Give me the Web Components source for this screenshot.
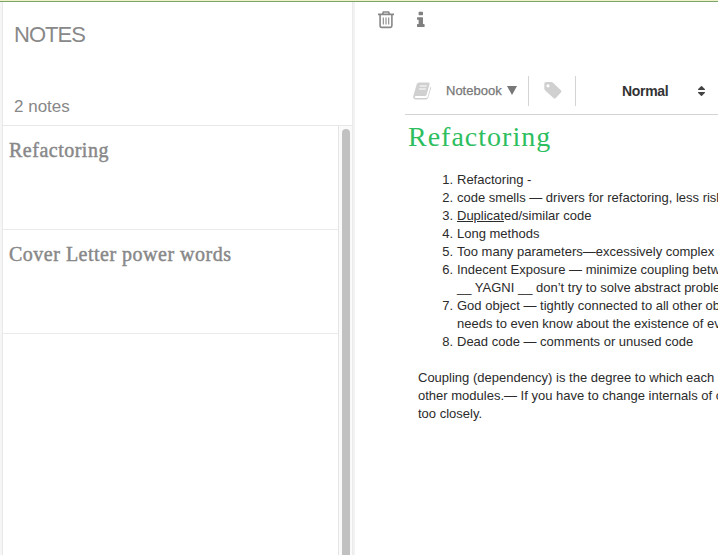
<!DOCTYPE html>
<html lang="en">
<head>
<meta charset="utf-8">
<title>Notes</title>
<style>
html,body{margin:0;height:100%;overflow:hidden;background:#fff}
body{font-family:"Liberation Sans",Arial,sans-serif}
</style>
</head>
<body>
<notes-app>
  <note-sidebar slot="side" heading="NOTES" count="2 notes">
    <note-card>Refactoring</note-card>
    <note-card style="--track:.5px">Cover Letter power words</note-card>
  </note-sidebar>
  <note-editor>
    <editor-toolbar slot="tools"></editor-toolbar>
    <span slot="title">Refactoring</span>
    <note-body></note-body>
  </note-editor>
</notes-app>
<script>
function define(name, markup, setup) {
  const t = document.createElement('template');
  t.innerHTML = markup;
  customElements.define(name, class extends HTMLElement {
    constructor() {
      super();
      this.attachShadow({mode: 'open'}).append(t.content.cloneNode(true));
    }
    connectedCallback() { if (setup) setup(this); }
  });
}

define('notes-app', `<style>
:host{display:flex;flex-direction:column;width:718px;height:555px;overflow:hidden}
.top{height:1px;flex:none;background:#eef3c8;border-bottom:1px solid #7ba36c}
.row{display:grid;grid-template-columns:2px 351px 2px 363px;flex:1;min-height:0}
.edge{background:#f6f6f6}.gap{background:#f2f2f2}
</style><div class="top"></div><div class="row"><div class="edge"></div><slot name="side"></slot><div class="gap"></div><slot></slot></div>`);

define('note-sidebar', `<style>
:host{display:flex;flex-direction:column;box-sizing:border-box;border-left:1px solid #e8e8e8;border-right:1px solid #ebebeb;min-height:0}
header{box-sizing:border-box;height:124px;flex:none;border-bottom:1px solid #e8e8e8;padding:20px 0 0 11px;color:#888}
h1{margin:0;font-size:22px;line-height:26px;font-weight:400;letter-spacing:-.95px}
p{margin:49px 0 0;font-size:17px;line-height:20px;letter-spacing:0}
.wrap{display:flex;flex:1;min-height:0}
.list{width:335px;flex:none}
.track{box-sizing:border-box;flex:1;border-left:1px solid #e5e5e5;background:#fafafa;padding:3px 2px 0 3px}
.thumb{height:100%;background:#c1c1c1;border-radius:4px 4px 0 0}
</style><header><h1></h1><p></p></header><div class="wrap"><div class="list"><slot></slot></div><div class="track"><div class="thumb"></div></div></div>`, el => {
  el.shadowRoot.querySelector('h1').textContent = el.getAttribute('heading');
  el.shadowRoot.querySelector('p').textContent = el.getAttribute('count');
});

define('note-card', `<style>
:host{display:block;box-sizing:border-box;height:104px;border-bottom:1px solid #ebebeb;padding:11px 0 0 6px;font-family:"Liberation Serif",serif;font-size:20px;line-height:26px;color:#888;letter-spacing:var(--track,.5px);-webkit-text-stroke:.45px #888;white-space:nowrap}
</style><slot></slot>`);

define('note-editor', `<style>
:host{display:block;overflow:hidden;min-width:0}
.actions{display:flex;height:35px;padding-left:23px;padding-top:9px;box-sizing:border-box}
.actions svg{flex:none}
.info{margin-left:23px}
slot[name=tools]{display:block;margin:36px 0 0 50px}
h2{margin:4px 0 0 53px;font:400 28px/36px "Liberation Serif",serif;letter-spacing:1px;color:#2dbe60}
</style>
<div class="actions">
<svg width="16" height="18" viewBox="0 0 16 18" fill="none" stroke="#888" stroke-width="1.6"><path d="M0 3.4H16M4.5 3.4L5.4 1H10.6L11.5 3.4M2.1 3.4V14.6Q2.1 16.4 3.6 16.4H12.4Q13.9 16.4 13.9 14.6V3.4"/><path d="M5.3 6.5V13.6M8 6.5V13.6M10.7 6.5V13.6" stroke-width="1.1"/></svg>
<svg class="info" width="8" height="18" viewBox="0 0 8 18" fill="#808080"><path d="M2.2.8H5.4Q6 .8 6 1.4V3.6Q6 4.2 5.4 4.2H2.2Q1.6 4.2 1.6 3.6V1.4Q1.6.8 2.2.8ZM.6 6.2H5.4Q6 6.2 6 6.8V13H7Q7.6 13 7.6 13.6V15.4Q7.6 16 7 16H.6Q0 16 0 15.4V13.6Q0 13 .6 13H1.6V8.8H.6Q0 8.8 0 8.2V6.8Q0 6.2.6 6.2Z"/></svg>
</div>
<slot name="tools"></slot>
<h2><slot name="title"></slot></h2>
<slot></slot>`);

define('editor-toolbar', `<style>
:host{display:flex;align-items:center;box-sizing:border-box;height:42px;padding:0 0 6px 8px;border-bottom:1px solid #d4d4d4;white-space:nowrap}
svg{flex:none;display:block}
.nb{margin-left:14px;font-size:13px;line-height:16px;color:#777;-webkit-text-stroke:.25px #777;width:56px;letter-spacing:0}
.tri{margin-left:5px}
.bar{width:1px;height:30px;background:#d4d4d4;flex:none;margin-top:1px}
.tag{margin:0 13px 0 15px}
.style{width:76px;margin-left:46px;font-size:14px;line-height:16px;font-weight:700;color:#333;letter-spacing:-.3px}
</style>
<svg width="19" height="18" viewBox="0 0 19 18"><path d="M6 .5H15.5Q17 .5 16.6 2L13.7 12.5Q13.3 14 11.8 14H3Q1.8 14 1.8 15T3 16H13Q14.3 16 14.8 14.5L17.6 4.5Q18.4 4.8 18.1 5.9L15.3 15.5Q14.7 17.5 12.8 17.5H3Q0 17.5 .2 14.2L3.8 2Q4.3.5 6 .5Z" fill="#d0d0d0"/><path d="M6.7 4H13.7M5.9 7H12.9" stroke="#fff" stroke-width="1.2"/></svg>
<span class="nb">Notebook</span>
<svg class="tri" width="10" height="9" viewBox="0 0 10 9"><path d="M0 0H10L5 9Z" fill="#777"/></svg>
<div class="bar" style="margin-left:11px"></div>
<svg class="tag" width="18" height="17" viewBox="0 0 18 17"><path d="M2 0H7.2Q8.4 0 9.3.9L16.9 8.2Q18 9.3 16.9 10.4L11.8 16Q10.7 17.2 9.5 16L1.2 8.4Q.3 7.5.3 6.2V1.8Q.3 0 2 0ZM4 2.2A1.6 1.6 0 1 0 4 5.4A1.6 1.6 0 1 0 4 2.2Z" fill="#d0d0d0" fill-rule="evenodd"/></svg>
<div class="bar"></div>
<span class="style">Normal</span>
<svg width="7" height="10" viewBox="0 0 7 10" fill="#444"><path d="M.2 4Q-.2 3.6.2 3.1L3 .3Q3.5-.1 4 .3L6.8 3.1Q7.2 3.6 6.8 4ZM.2 6Q-.2 6.4.2 6.9L3 9.7Q3.5 10.1 4 9.7L6.8 6.9Q7.2 6.4 6.8 6Z"/></svg>`);

define('note-body', `<style>
:host{display:block;margin:16px 0 0 63px;font-size:13px;line-height:18px;color:#2b2b2b;white-space:nowrap}
ol{margin:0;padding:0;list-style:none}
li{display:grid;grid-template-columns:35px 1fr;column-gap:4px}
li>span:first-child{text-align:right}
p{margin:18px 0 0}
</style>
<ol>
<li><span>1.</span><span>Refactoring -</span></li>
<li><span>2.</span><span>code smells — drivers for refactoring, less risk</span></li>
<li><span>3.</span><span><u>Duplicat</u>ed/similar code</span></li>
<li><span>4.</span><span>Long methods</span></li>
<li><span>5.</span><span>Too many parameters—excessively complex</span></li>
<li><span>6.</span><span>Indecent Exposure — minimize coupling betw<br>__ YAGNI __ don’t try to solve abstract proble</span></li>
<li><span>7.</span><span>God object — tightly connected to all other ob<br>needs to even know about the existence of ev</span></li>
<li><span>8.</span><span>Dead code — comments or unused code</span></li>
</ol>
<p>Coupling (dependency) is the degree to which each<br>other modules.— If you have to change internals of o<br>too closely.</p>`);
</script>
</body>
</html>
